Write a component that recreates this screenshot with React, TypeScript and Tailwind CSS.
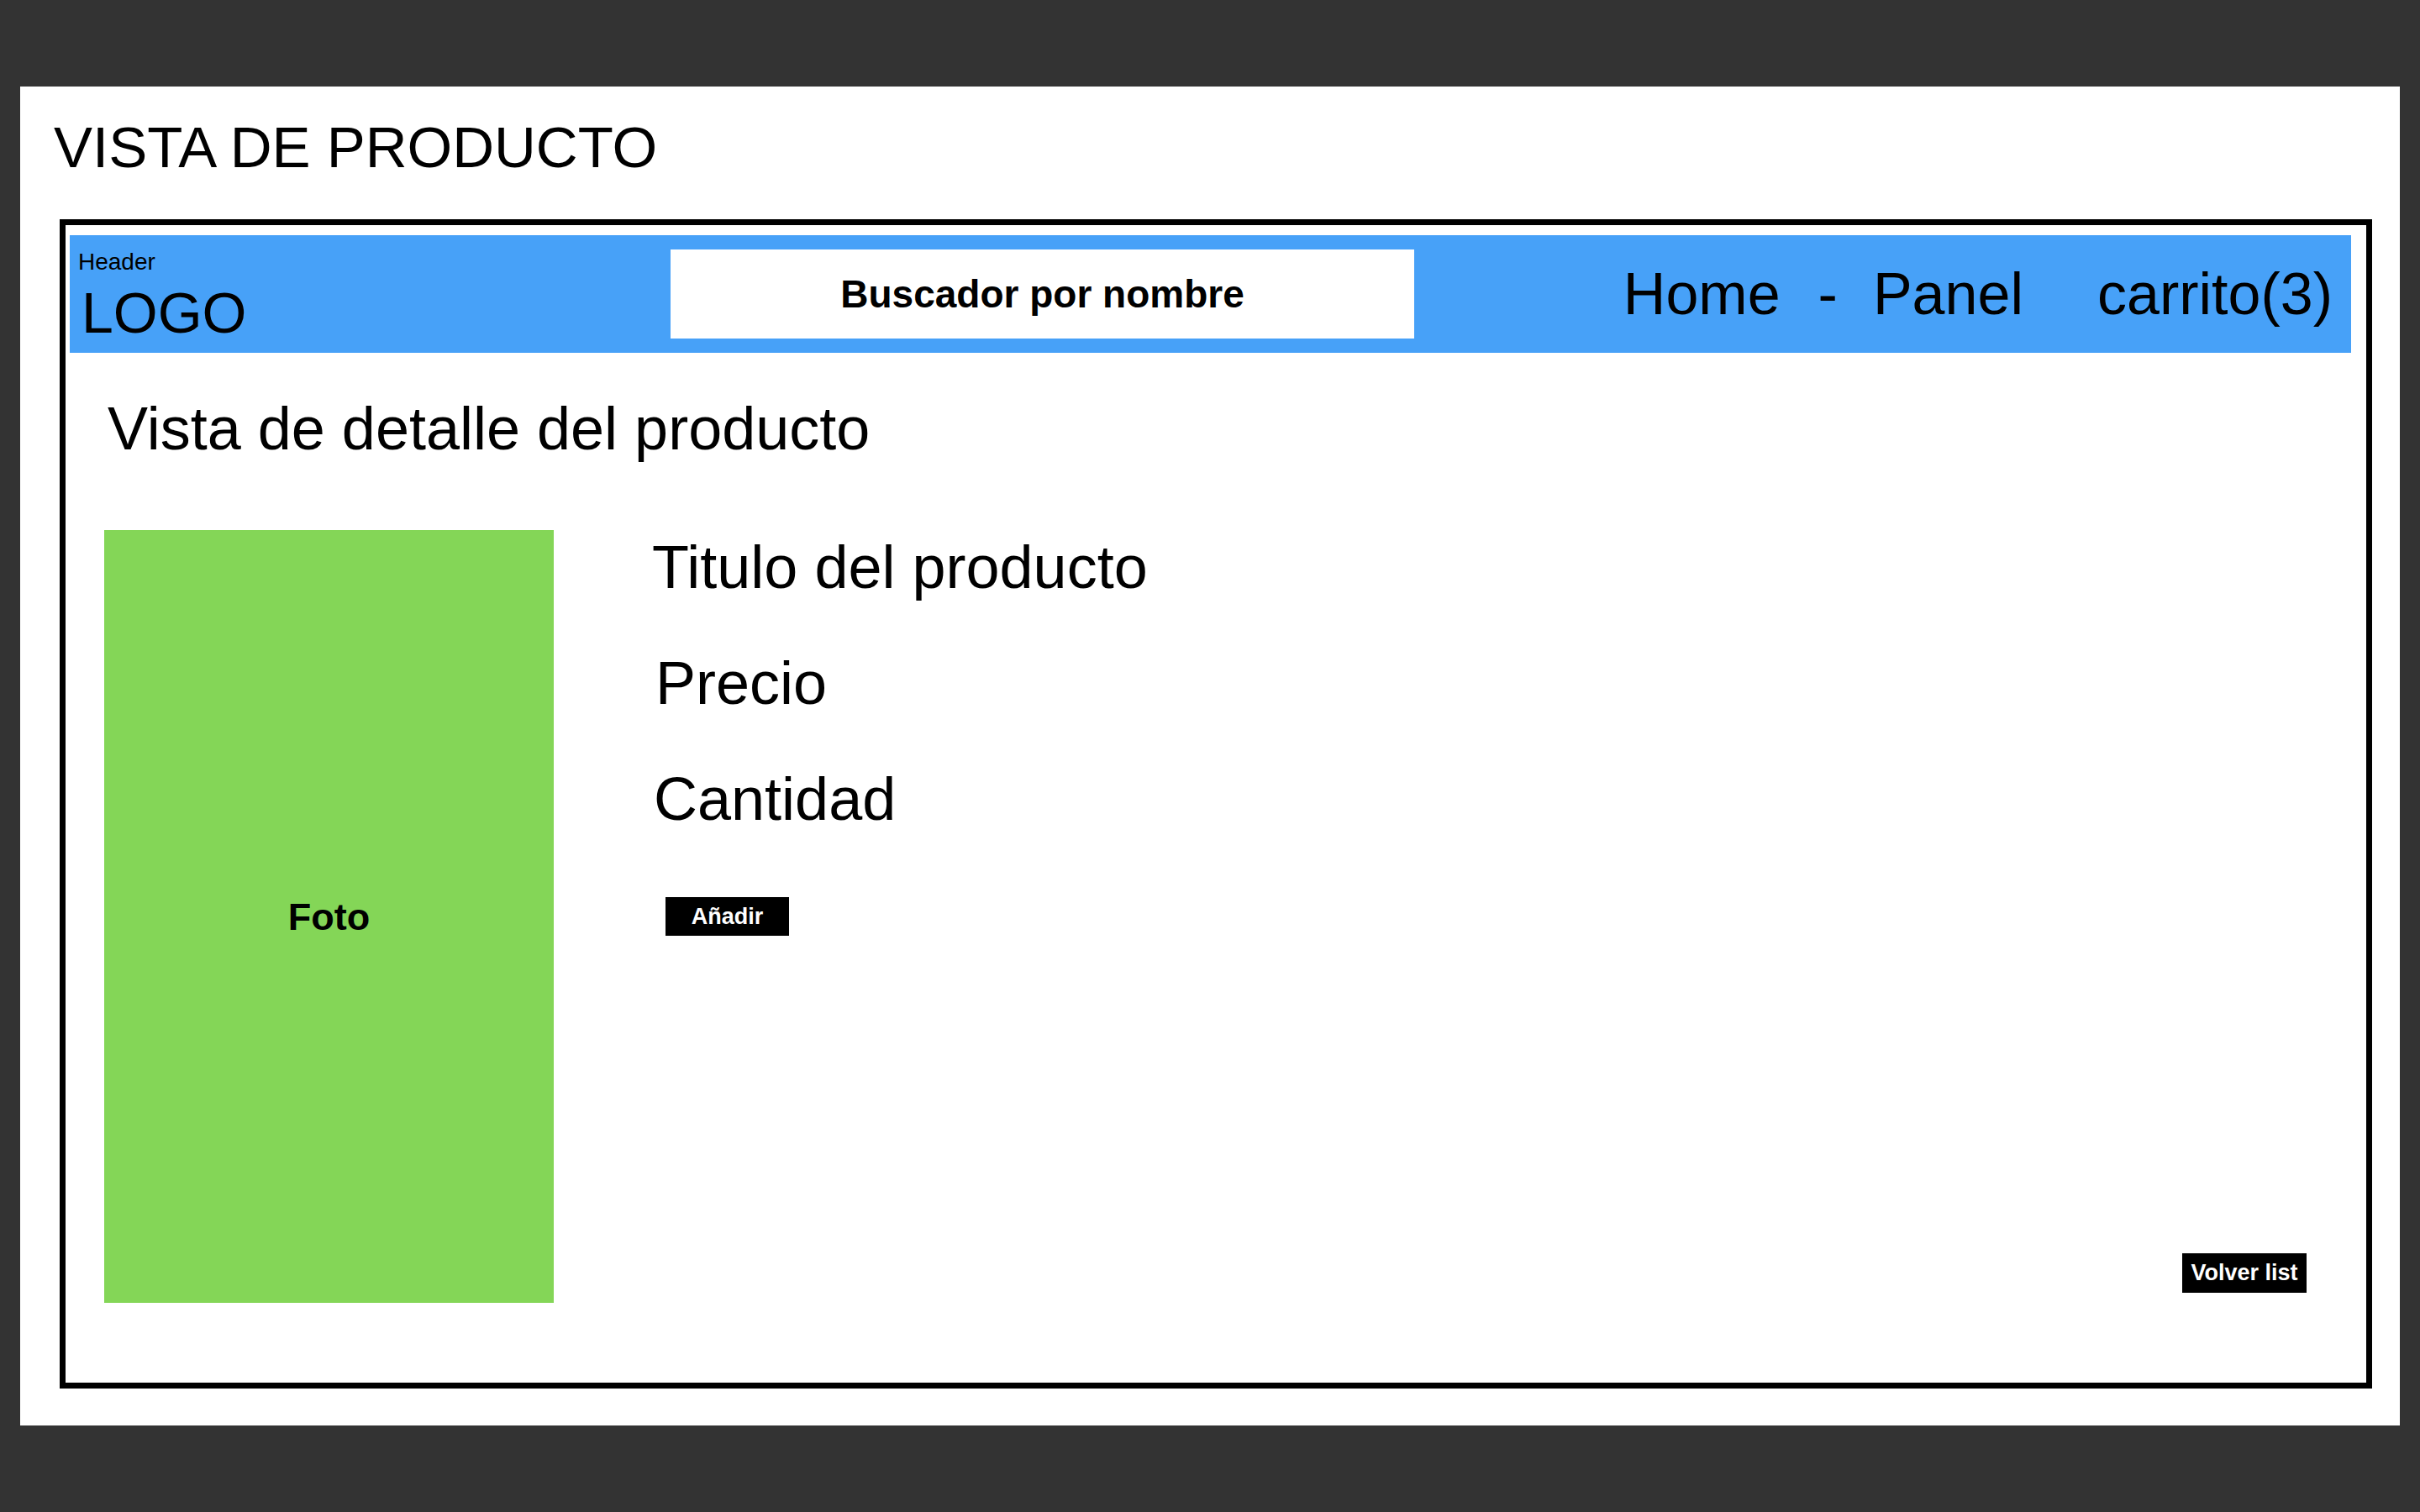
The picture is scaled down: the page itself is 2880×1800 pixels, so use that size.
import React from 'react';

const font = { fontFamily: '"Liberation Sans", Arial, sans-serif' };

const ProductView: React.FC = () => {
  return (
    <div className="min-h-screen bg-[#333333] px-[24px] py-[103px] text-black" style={font}>
      <div className="bg-white h-[1594px] pt-[38px] pl-[40px] pr-[33px]">
        <h1 className="text-[69px] leading-none">VISTA DE PRODUCTO</h1>

        <div className="mt-[51px] ml-[7px] h-[1392px] border-[7px] border-black flex flex-col">
          {/* header */}
          <header className="mt-[12px] ml-[5px] mr-[18px] h-[140px] bg-[#47a1f8] flex items-center">
            <div className="w-[715px] self-start pt-[18px] pl-[10px] flex flex-col">
              <span className="text-[28px] leading-none">Header</span>
              <span className="text-[68px] leading-none mt-[12px] ml-[4px]">LOGO</span>
            </div>
            <div className="w-[885px] h-[106px] bg-white flex items-center justify-center">
              <span className="text-[46px] font-bold leading-none">Buscador por nombre</span>
            </div>
            <nav className="flex-1 flex justify-end pr-[22px] text-[70px] leading-none">
              <span>Home</span>
              <span className="ml-[45px]">-</span>
              <span className="ml-[42px]">Panel</span>
              <span className="ml-[88px]">carrito(3)</span>
            </nav>
          </header>

          <h2 className="mt-[54px] ml-[50px] text-[72px] leading-none font-normal">
            Vista de detalle del producto
          </h2>

          <div className="mt-[85px] pl-[46px] pr-[71px] flex">
            <div className="w-[535px] h-[920px] bg-[#84d657] flex items-center justify-center">
              <span className="text-[45px] font-bold leading-none">Foto</span>
            </div>

            <div className="ml-[117px] flex-1 flex flex-col">
              <span className="mt-[8px] text-[72px] leading-none">Titulo del producto</span>
              <span className="mt-[66px] ml-[4px] text-[72px] leading-none">Precio</span>
              <span className="mt-[66px] ml-[2px] text-[72px] leading-none">Cantidad</span>
              <button className="mt-[81px] ml-[16px] w-[147px] h-[46px] bg-black text-white text-[27px] font-bold leading-none flex items-center justify-center">
                Añadir
              </button>
              <button className="mt-auto mb-[12px] self-end w-[148px] h-[47px] bg-black text-white text-[27px] font-bold leading-none flex items-center justify-center">
                Volver list
              </button>
            </div>
          </div>
        </div>
      </div>
    </div>
  );
};

export default function App() {
  return <ProductView />;
}
